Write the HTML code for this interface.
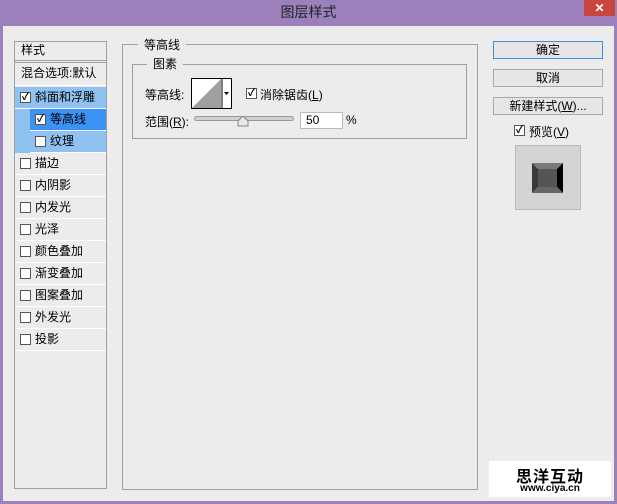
<!DOCTYPE html>
<html><head><meta charset="utf-8"><style>
*{margin:0;padding:0;box-sizing:border-box}
body{width:617px;height:504px;background:#9c80bc;font-family:"Liberation Sans","Microsoft YaHei","Noto Sans CJK SC",sans-serif;font-size:12px;color:#000;position:relative;overflow:hidden}
.a{position:absolute}
#content{left:3px;top:26px;width:611px;height:475px;background:#ececec}
.title{left:0;top:2px;width:617px;text-align:center;font-size:14px;color:#222}
.close{left:584px;top:0;width:31px;height:16px;background:#c9463d;color:#fff;text-align:center;font-size:12px;line-height:16px;font-weight:bold}
.lp{left:14px;top:41px;width:93px;height:448px;border:1px solid #a0a0a0;background:#ececec}
.row{position:absolute;left:0;width:91px;height:22px;border-bottom:1px solid #fff;line-height:21px;padding-left:20px;font-size:12px}
.cb{position:absolute;width:11px;height:11px;border:1px solid #555;background:#fff;font-size:10px;line-height:9px;text-align:center;font-weight:bold}
.row .cb{left:5px;top:5px}
.fs{border:1px solid #a0a0a0}
.leg{position:absolute;background:#ececec;padding:0 6px;font-size:12px}
.btn{position:absolute;left:493px;width:110px;height:18px;border:1px solid #a8a8a8;background:#e6e6e6;text-align:center;line-height:16px;font-size:12px}
</style></head><body>
<div class="a title">图层样式</div>
<div class="a close">✕</div>
<div class="a" id="content"></div>

<div class="a lp">
 <div class="row" style="top:0;padding-left:6px;height:21px;border-bottom:3px double #a0a0a0;line-height:16px">样式</div>
 <div class="row" style="top:22px;padding-left:6px;height:22px;line-height:18px">混合选项:默认</div>
 <div class="row" style="top:45px;background:#8fc1f1"><span class="cb">✓</span>斜面和浮雕</div>
 <div class="row" style="top:67px;left:15px;width:76px;background:#3a92f5"><span class="cb">✓</span>等高线</div>
 <div class="row" style="top:67px;left:0;width:15px;background:#8fc1f1;padding:0;border:0"></div>
 <div class="row" style="top:89px;left:15px;width:76px;background:#8fc1f1"><span class="cb"></span>纹理</div>
 <div class="row" style="top:89px;left:0;width:15px;background:#8fc1f1;padding:0;border:0"></div>
 <div class="row" style="top:111px"><span class="cb"></span>描边</div>
 <div class="row" style="top:133px"><span class="cb"></span>内阴影</div>
 <div class="row" style="top:155px"><span class="cb"></span>内发光</div>
 <div class="row" style="top:177px"><span class="cb"></span>光泽</div>
 <div class="row" style="top:199px"><span class="cb"></span>颜色叠加</div>
 <div class="row" style="top:221px"><span class="cb"></span>渐变叠加</div>
 <div class="row" style="top:243px"><span class="cb"></span>图案叠加</div>
 <div class="row" style="top:265px"><span class="cb"></span>外发光</div>
 <div class="row" style="top:287px"><span class="cb"></span>投影</div>
</div>

<div class="a fs" style="left:122px;top:44px;width:356px;height:446px"></div>
<div class="leg" style="left:138px;top:36px">等高线</div>
<div class="a fs" style="left:132px;top:64px;width:335px;height:75px"></div>
<div class="leg" style="left:147px;top:55px">图素</div>

<div class="a" style="left:145px;top:86px">等高线:</div>
<div class="a" style="left:191px;top:78px;width:41px;height:31px;border:1px solid #000;background:#fff">
 <svg width="39" height="29" style="position:absolute;left:0;top:0"><polygon points="0,29 29,0 29,29" fill="#a0a0a0"/><line x1="30" y1="0" x2="30" y2="29" stroke="#000"/><polygon points="32,13 37,13 34.5,16" fill="#000"/></svg>
</div>
<span class="cb a" style="left:246px;top:88px">✓</span>
<div class="a" style="left:260px;top:86px">消除锯齿(<u>L</u>)</div>

<div class="a" style="left:145px;top:113px">范围(<u>R</u>):</div>
<div class="a" style="left:194px;top:116px;width:100px;height:5px;border:1px solid #999;border-radius:3px;background:#d0d0d0"></div>
<svg class="a" style="left:237px;top:116px" width="12" height="11"><polygon points="6,0 11,5 11,10 1,10 1,5" fill="#e8e8e8" stroke="#888"/></svg>
<div class="a" style="left:300px;top:112px;width:43px;height:17px;border:1px solid #bbb;background:#fff;padding-left:5px;line-height:15px">50</div>
<div class="a" style="left:346px;top:113px">%</div>

<div class="btn" style="top:41px;border-color:#3c8ee0">确定</div>
<div class="btn" style="top:69px">取消</div>
<div class="btn" style="top:97px">新建样式(<u>W</u>)...</div>
<span class="cb a" style="left:514px;top:125px">✓</span>
<div class="a" style="left:529px;top:123px">预览(<u>V</u>)</div>
<div class="a" style="left:515px;top:145px;width:66px;height:65px;border:1px solid #bbb;background:#d4d4d4">
 <svg width="31" height="30" style="position:absolute;left:16px;top:17px">
  <polygon points="0,0 31,0 25,6 6,6" fill="#7a7a7a"/>
  <polygon points="0,0 6,6 6,24 0,30" fill="#3a3a3a"/>
  <polygon points="31,0 31,30 25,24 25,6" fill="#000"/>
  <polygon points="0,30 6,24 25,24 31,30" fill="#666"/>
  <rect x="6" y="6" width="19" height="18" fill="#555"/>
 </svg>
</div>

<div class="a" style="left:489px;top:461px;width:122px;height:36px;background:#fff"></div>
<div class="a" style="left:489px;top:463px;width:122px;text-align:center;font-size:16px;font-weight:bold;letter-spacing:1px">思洋互动</div>
<div class="a" style="left:489px;top:483px;width:122px;text-align:center;font-size:10px;font-weight:bold">www.ciya.cn</div>
</body></html>
